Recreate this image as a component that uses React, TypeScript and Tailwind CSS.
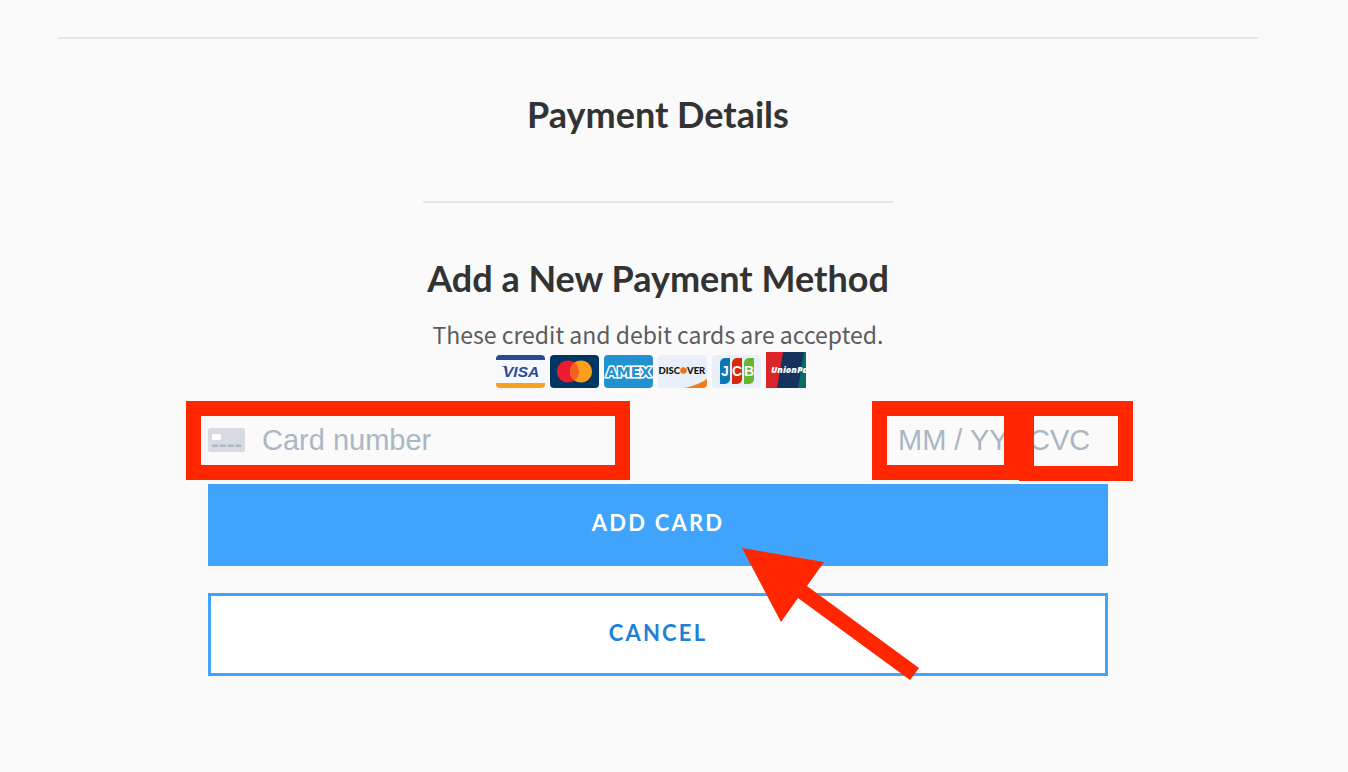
import React from "react";

const field =
  "min-w-0 bg-transparent font-['Liberation_Sans',Arial,sans-serif] text-[29px] leading-9 text-[#32325d] outline-none placeholder:text-[#aab7c4] placeholder:opacity-100";

function Visa() {
  return (
    <svg viewBox="0 0 49 33" className="h-[33px] w-[49px]" role="img" aria-label="Visa">
      <rect width="49" height="33" rx="4" fill="#f5f8fc" />
      <path d="M0 5V4a4 4 0 0 1 4-4h41a4 4 0 0 1 4 4v1z" fill="#2b4a94" />
      <path d="M0 28h49v1a4 4 0 0 1-4 4H4a4 4 0 0 1-4-4z" fill="#f9a01e" />
      <path d="M5.500 11h5l1 5c-1-2.500-3-4-6-5z" fill="#2b4a94" />
      <text x="7" y="22" fontFamily="Liberation Sans, Arial, sans-serif" fontSize="15.500" fontWeight="700" fontStyle="italic" fill="#2b4a94">VISA</text>
    </svg>
  );
}

function Mastercard() {
  return (
    <svg viewBox="0 0 49 33" className="h-[33px] w-[49px]" role="img" aria-label="Mastercard">
      <rect width="49" height="33" rx="4" fill="#003663" />
      <circle cx="18" cy="16.5" r="11" fill="#ed1c2e" />
      <circle cx="31" cy="16.5" r="11" fill="#fa9f1c" />
      <path d="M24.5 7.6a11 11 0 0 1 0 17.8a11 11 0 0 1 0-17.8z" fill="#f26122" />
    </svg>
  );
}

function Amex() {
  return (
    <svg viewBox="0 0 49 33" className="h-[33px] w-[49px]" role="img" aria-label="American Express">
      <rect width="49" height="33" rx="4" fill="#2191d0" />
      <text
        x="2"
        y="21.5"
        fontFamily="DejaVu Sans, sans-serif"
        fontSize="14"
        fontWeight="700"
        fill="#2191d0"
        stroke="#fff"
        strokeWidth="3"
        paintOrder="stroke"
      >
        AMEX
      </text>
    </svg>
  );
}

function Discover() {
  return (
    <svg viewBox="0 0 49 33" className="h-[33px] w-[49px]" role="img" aria-label="Discover">
      <rect width="49" height="33" rx="4" fill="#e9f0fa" />
      <path d="M26 33C36 31 43 28 49 24v5a4 4 0 0 1-4 4z" fill="#f47b16" />
      <g fontFamily="Lato, sans-serif" fontSize="9.500" fontWeight="900" fill="#111">
        <text x="0.5" y="19">DISC</text>
        <text x="29" y="19">VER</text>
      </g>
      <circle cx="25.500" cy="15.500" r="3.300" fill="#f4701b" />
    </svg>
  );
}

function Jcb() {
  return (
    <svg viewBox="0 0 49 33" className="h-[33px] w-[49px]" role="img" aria-label="JCB">
      <rect width="49" height="33" rx="4" fill="#e9f0fa" />
      <path d="M8 29V8a5 5 0 0 1 5-5h5v21a5 5 0 0 1-5 5z" fill="#0879b6" />
      <path d="M20 29V8a5 5 0 0 1 5-5h5v21a5 5 0 0 1-5 5z" fill="#d9290b" />
      <path d="M32 29V8a5 5 0 0 1 5-5h5v21a5 5 0 0 1-5 5z" fill="#69b62e" />
      <g fontFamily="Liberation Sans, Arial, sans-serif" fontSize="14" fontWeight="700" fill="#fff">
        <text x="9" y="21">J</text>
        <text x="20" y="21">C</text>
        <text x="32" y="21">B</text>
      </g>
    </svg>
  );
}

function UnionPay() {
  return (
    <svg viewBox="0 0 40 36" className="h-9 w-10" role="img" aria-label="UnionPay">
      <rect width="40" height="36" fill="#056f64" />
      <path d="M0 0H38L32 36H0z" fill="#17325f" />
      <path d="M0 0H17L11 36H0z" fill="#dd2529" />
      <text x="5" y="21" fontFamily="Open Sans, sans-serif" fontSize="9" fontWeight="800" fontStyle="italic" fill="#fff">UnionPa</text>
    </svg>
  );
}

function CardIcon() {
  return (
    <svg viewBox="0 0 37 24" className="h-6 w-[37px] shrink-0" aria-hidden="true">
      <rect width="37" height="24" rx="2.500" fill="#d8dbe4" />
      <rect x="4" y="6" width="9" height="6" rx="1" fill="#fff" />
      <path d="M5.200 17.700H9.200M12.800 17.700H16.800M20.800 17.700H24.800M28.400 17.700H32.400" stroke="#aab7c4" strokeWidth="2.400" strokeLinecap="round" />
    </svg>
  );
}

export default function App() {
  return (
    <main className="min-h-screen bg-[#fafafa] pt-[37px] pr-[90px] pb-24 pl-[58px] font-[Lato,sans-serif] text-[#333]">
      <hr className="border-t-2 border-[#e6e6e6]" />
      <div className="mx-auto flex max-w-[900px] flex-col items-center">
        <h1 className="mt-[55px] text-4xl leading-10 font-bold">Payment Details</h1>
        <div className="mt-[67px] flex flex-col">
          <hr className="-mx-1 border-t-2 border-[#e6e6e6]" />
          <h2 className="mt-[55px] text-center text-4xl leading-10 font-bold">Add a New Payment Method</h2>
        </div>
        <p className="mt-5 font-['Noto_Sans_CJK_SC',sans-serif] text-[23px] leading-8 text-[#5c5c5c]">
          These credit and debit cards are accepted.
        </p>
        <ul className="mt-[2px] grid h-9 grid-cols-6 items-end">
          {[Visa, Mastercard, Amex, Discover, Jcb, UnionPay].map((Logo) => (
            <li key={Logo.name} className="w-[54px]">
              <Logo />
            </li>
          ))}
        </ul>
        <form className="relative mt-[34px] w-full" onSubmit={(e) => e.preventDefault()}>
          <div className="flex h-9 items-center">
            <CardIcon />
            <input aria-label="Card number" placeholder="Card number" className={`${field} ml-[17px] flex-1`} />
            <input aria-label="Expiry date" placeholder="MM / YY" className={`${field} w-[131px]`} />
            <input aria-label="CVC" placeholder="CVC" className={`${field} w-[79px]`} />
          </div>
          <button
            type="submit"
            className="mt-[26px] block h-[82px] w-full bg-[#40a4fc] pb-1 text-[22px] leading-8 font-bold tracking-widest text-white"
          >
            ADD CARD
          </button>
          <button
            type="button"
            className="mt-[27px] block h-[83px] w-full border-3 border-[#40a4fc] bg-white pb-1 text-[22px] leading-8 font-bold tracking-widest text-[#217fdc]"
          >
            CANCEL
          </button>
          <div className="pointer-events-none absolute -top-[21px] -left-[22px] h-[79px] w-[444px] border-15 border-[#ff2600]" />
          <div className="pointer-events-none absolute -top-[21px] right-[89px] h-[79px] w-[147px] border-15 border-[#ff2600]" />
          <div className="pointer-events-none absolute -top-[21px] -right-[25px] h-20 w-[114px] border-15 border-[#ff2600]" />
          <svg
            viewBox="0 0 178 133"
            className="pointer-events-none absolute top-[126px] right-[188px] h-[133px] w-[178px]"
            aria-hidden="true"
          >
            <path d="M0 0L82 14L65 38L177 120L168 132L56 50L39 74z" fill="#ff2600" />
          </svg>
        </form>
      </div>
    </main>
  );
}
